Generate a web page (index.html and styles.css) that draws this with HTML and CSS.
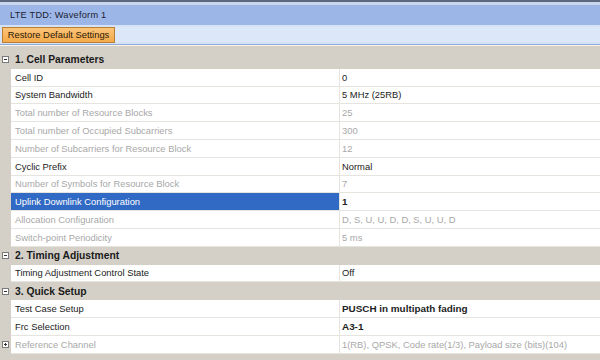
FILE: index.html
```html
<!DOCTYPE html>
<html>
<head>
<meta charset="utf-8">
<link rel="stylesheet" href="styles.css">
</head>
<body>
<div class="window">
  <div class="topline"></div>
  <div class="titlebar">LTE TDD: Waveform 1</div>
  <div class="toolbar"><button class="btn">Restore Default Settings</button><div class="toolfill"></div></div>
  <div class="spacer"></div>
  <div class="grid">
    <div class="cat"><span class="exp"><span class="h"></span></span><span class="cattext">1. Cell Parameters</span></div>
    <div class="row"><span class="gutter"></span><div class="label">Cell ID</div><div class="value">0</div></div>
    <div class="row"><span class="gutter"></span><div class="label">System Bandwidth</div><div class="value">5 MHz (25RB)</div></div>
    <div class="row dis"><span class="gutter"></span><div class="label">Total number of Resource Blocks</div><div class="value">25</div></div>
    <div class="row dis"><span class="gutter"></span><div class="label">Total number of Occupied Subcarriers</div><div class="value">300</div></div>
    <div class="row dis"><span class="gutter"></span><div class="label">Number of Subcarriers for Resource Block</div><div class="value">12</div></div>
    <div class="row"><span class="gutter"></span><div class="label">Cyclic Prefix</div><div class="value">Normal</div></div>
    <div class="row dis"><span class="gutter"></span><div class="label">Number of Symbols for Resource Block</div><div class="value">7</div></div>
    <div class="row sel"><span class="gutter"></span><div class="label">Uplink Downlink Configuration</div><div class="value b">1</div></div>
    <div class="row dis"><span class="gutter"></span><div class="label">Allocation Configuration</div><div class="value">D, S, U, U, D, D, S, U, U, D</div></div>
    <div class="row dis"><span class="gutter"></span><div class="label">Switch-point Periodicity</div><div class="value">5 ms</div></div>
    <div class="cat"><span class="exp"><span class="h"></span></span><span class="cattext">2. Timing Adjustment</span></div>
    <div class="row"><span class="gutter"></span><div class="label">Timing Adjustment Control State</div><div class="value">Off</div></div>
    <div class="cat"><span class="exp"><span class="h"></span></span><span class="cattext">3. Quick Setup</span></div>
    <div class="row"><span class="gutter"></span><div class="label">Test Case Setup</div><div class="value b">PUSCH in multipath fading</div></div>
    <div class="row"><span class="gutter"></span><div class="label">Frc Selection</div><div class="value b">A3-1</div></div>
    <div class="row dis"><span class="gutter"><span class="exp plus"><span class="h"></span><span class="v"></span></span></span><div class="label">Reference Channel</div><div class="value">1(RB), QPSK, Code rate(1/3), Payload size (bits)(104)</div></div>
  </div>
</div>
</body>
</html>
```

FILE: styles.css
```css
html, body {
  margin: 0;
  padding: 0;
  width: 600px;
  height: 360px;
  overflow: hidden;
  background: #ffffff;
}
.window {
  width: 600px;
  height: 360px;
  overflow: hidden;
  font-family: "Liberation Sans", Arial, sans-serif;
  font-size: 9.4px;
  color: #222222;
  background: #d4d0c8;
  white-space: nowrap;
}
.topline {
  height: 2px;
  background: #5c6880;
  border-bottom: 3px solid #c9d5ec;
}
.titlebar {
  height: 20px;
  line-height: 21px;
  background: #9cb6e8;
  padding-left: 10px;
  color: #1c2230;
  font-size: 9.2px;
  letter-spacing: 0.25px;
}
.toolbar {
  display: flex;
  align-items: flex-start;
  background: #d6e2f6;
  border-bottom: 1px solid #8ea9dc;
  padding: 2px 0 0 2px;
  height: 17px;
}
.toolfill {
  flex: 1;
  height: 15px;
  background: #dce7f9;
}
.btn {
  display: block;
  height: 16px;
  width: 113px;
  margin: 0;
  padding: 0;
  border: 1px solid #b88034;
  background: linear-gradient(#fbc478, #f5a94a);
  font-family: "Liberation Sans", Arial, sans-serif;
  font-size: 9.4px;
  color: #2a1a08;
  text-align: center;
  line-height: 14px;
  white-space: nowrap;
}
.spacer {
  height: 6px;
  border-top: 1px solid #fbf6e6;
  box-sizing: border-box;
}
.grid {
  display: flex;
  flex-direction: column;
}
.cat {
  height: 17.8px;
  display: flex;
  align-items: center;
  background: #d4d0c8;
  font-weight: bold;
  font-size: 10.3px;
  color: #1a1a1a;
}
.cattext {
  padding-left: 6px;
}
.exp {
  width: 7px;
  height: 7px;
  border: 1px solid #7a7a7a;
  background: #ffffff;
  margin-left: 2px;
  position: relative;
  box-sizing: border-box;
  flex: none;
}
.exp .h {
  position: absolute;
  left: 1px;
  right: 1px;
  top: 2px;
  height: 1px;
  background: #333;
}
.exp .v {
  position: absolute;
  top: 1px;
  bottom: 1px;
  left: 2px;
  width: 1px;
  background: #333;
}
.row {
  height: 17.8px;
  display: flex;
  align-items: stretch;
}
.gutter {
  width: 11px;
  flex: none;
  background: #d4d0c8;
  display: flex;
  align-items: center;
}
.gutter .exp {
  margin-left: 2px;
}
.label {
  width: 324px;
  flex: none;
  background: #ffffff;
  padding-left: 4px;
  border-bottom: 1px solid #e6e4df;
  border-right: 1px solid #e6e4df;
  display: flex;
  align-items: center;
  height: 16.8px;
}
.value {
  flex: 1;
  background: #ffffff;
  padding-left: 2px;
  border-bottom: 1px solid #e6e4df;
  display: flex;
  align-items: center;
  height: 16.8px;
}
.value.b {
  font-weight: bold;
  font-size: 9.9px;
}
.row.dis .label, .row.dis .value {
  color: #a8a8a8;
}
.row.sel .label {
  background: #316ac5;
  color: #ffffff;
}
```
